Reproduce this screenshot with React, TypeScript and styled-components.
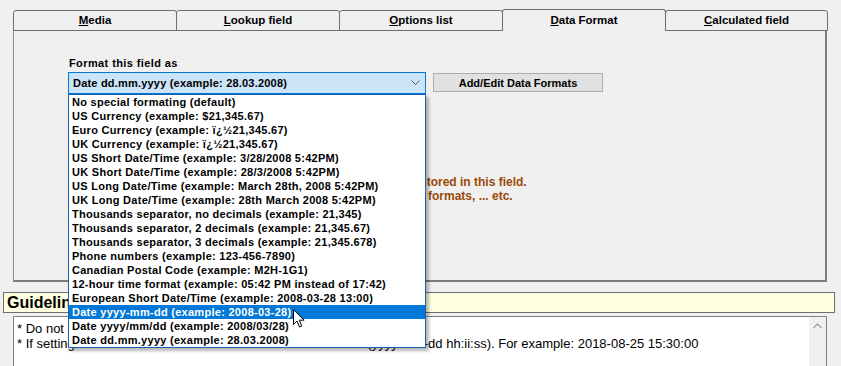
import React from "react";
import styled, { createGlobalStyle } from "styled-components";

const GlobalStyle = createGlobalStyle`
  html, body { margin: 0; padding: 0; background: #f0f0f0; }
  body { font-family: "Liberation Sans", Arial, sans-serif; color: #000; }
  * { box-sizing: border-box; }
`;

const Page = styled.div`
  width: 841px;
  height: 366px;
  overflow: hidden;
  padding-top: 9px;
  display: flex;
  flex-direction: column;
`;

const TabStrip = styled.div`
  display: flex;
  align-items: flex-end;
  margin-left: 13px;
  height: 22px;
  margin-bottom: -1px;
  position: relative;
  z-index: 1;
`;

const Tab = styled.div<{ $active?: boolean; $w: number }>`
  width: ${(p) => p.$w}px;
  height: ${(p) => (p.$active ? 22 : 21)}px;
  margin-left: -1px;
  &:first-child { margin-left: 0; }
  border: 1px solid #6e6e6e;
  border-bottom: ${(p) => (p.$active ? "none" : "1px solid #6e6e6e")};
  border-radius: 3px 3px 0 0;
  background: #f0f0f0;
  display: flex;
  justify-content: center;
  align-items: ${(p) => (p.$active ? "flex-start" : "center")};
  padding-top: ${(p) => (p.$active ? 4 : 0)}px;
  padding-bottom: ${(p) => (p.$active ? 0 : 2)}px;
  font-size: 11.5px;
  font-weight: bold;
  position: relative;
  z-index: ${(p) => (p.$active ? 2 : 1)};
`;

const AccessKey = styled.span`
  text-decoration: underline;
`;

const Panel = styled.div`
  margin-left: 13px;
  width: 814px;
  height: 252px;
  border-top: 1px solid #8c8c8c;
  border-left: 1px solid #8c8c8c;
  border-right: 2px solid #7d7d7d;
  border-bottom: 2px solid #7d7d7d;
  padding: 26px 0 0 55px;
  display: flex;
  flex-direction: column;
`;

const FieldLabel = styled.div`
  font-size: 11px;
  font-weight: bold;
  letter-spacing: 0.4px;
  line-height: 13px;
  margin-bottom: 2px;
`;

const FormatRow = styled.div`
  display: flex;
  align-items: flex-start;
  margin-left: -1px;
  gap: 7px;
`;

const SelectWrap = styled.div`
  position: relative;
  width: 358px;
`;

const SelectBox = styled.div`
  height: 22px;
  border: 1px solid #0078d7;
  background: #cce4f7;
  display: flex;
  align-items: center;
  justify-content: space-between;
  padding: 0 5px 0 4px;
  font-size: 11px;
  font-weight: bold;
  letter-spacing: 0.2px;
`;

const DropList = styled.div`
  position: absolute;
  left: 0;
  top: 22px;
  width: 358px;
  background: #fff;
  border: 1px solid #1a5fb4;
  box-shadow: 3px 3px 3px rgba(0, 0, 0, 0.28);
  z-index: 10;
`;

const DropItem = styled.div<{ $selected?: boolean }>`
  height: 14px;
  line-height: 14px;
  padding-left: 3px;
  font-size: 11px;
  font-weight: bold;
  letter-spacing: 0.28px;
  white-space: nowrap;
  background: ${(p) => (p.$selected ? "#0078d7" : "transparent")};
  color: ${(p) => (p.$selected ? "#fff" : "#000")};
`;

const Cursor = styled.svg`
  position: absolute;
  left: 224px;
  top: 214px;
`;

const Button = styled.div`
  width: 170px;
  height: 19px;
  margin-top: 1px;
  background: #e1e1e1;
  border: 1px solid #adadad;
  display: flex;
  align-items: center;
  justify-content: center;
  font-size: 11px;
  font-weight: bold;
`;

const Notes = styled.div`
  margin-top: 81px;
  color: #9a4a06;
  font-size: 12px;
  font-weight: bold;
  line-height: 14px;
`;

const NoteLine = styled.div`
  display: flex;
  white-space: nowrap;
`;

const Hidden = styled.span<{ $w: number }>`
  display: inline-block;
  width: ${(p) => p.$w}px;
  overflow: hidden;
`;

const GuideBar = styled.div`
  margin: 10px 0 0 3px;
  width: 832px;
  height: 21px;
  border: 1px solid #6e6e6e;
  background: #ffffe1;
  font-size: 16px;
  font-weight: bold;
  line-height: 19px;
  padding-left: 3px;
`;

const GuideBox = styled.div`
  margin: 3px 0 0 13px;
  width: 814px;
  flex: 1;
  border: 1px solid #828282;
  border-bottom: none;
  background: #fff;
  display: flex;
`;

const GuideText = styled.div`
  flex: 1;
  padding: 4px 0 0 3px;
  font-size: 13px;
  line-height: 15px;
  white-space: nowrap;
`;

const ScrollBar = styled.div`
  width: 17px;
  background: #f0f0f0;
  display: flex;
  justify-content: center;
  padding-top: 6px;
`;

const tabs = [
  { key: "M", rest: "edia", w: 164 },
  { key: "L", rest: "ookup field", w: 164 },
  { key: "O", rest: "ptions list", w: 164 },
  { key: "D", rest: "ata Format", w: 164, active: true },
  { key: "C", rest: "alculated field", w: 163 },
];

const formats = [
  "No special formating (default)",
  "US Currency (example: $21,345.67)",
  "Euro Currency (example: \u00ef\u00bf\u00bd21,345.67)",
  "UK Currency (example: \u00ef\u00bf\u00bd21,345.67)",
  "US Short Date/Time (example: 3/28/2008 5:42PM)",
  "UK Short Date/Time (example: 28/3/2008 5:42PM)",
  "US Long Date/Time (example: March 28th, 2008 5:42PM)",
  "UK Long Date/Time (example: 28th March 2008 5:42PM)",
  "Thousands separator, no decimals (example: 21,345)",
  "Thousands separator, 2 decimals (example: 21,345.67)",
  "Thousands separator, 3 decimals (example: 21,345.678)",
  "Phone numbers (example: 123-456-7890)",
  "Canadian Postal Code (example: M2H-1G1)",
  "12-hour time format (example: 05:42 PM instead of 17:42)",
  "European Short Date/Time (example: 2008-03-28 13:00)",
  "Date yyyy-mm-dd (example: 2008-03-28)",
  "Date yyyy/mm/dd (example: 2008/03/28)",
  "Date dd.mm.yyyy (example: 28.03.2008)",
];

export default function App() {
  return (
    <>
      <GlobalStyle />
      <Page>
        <TabStrip>
          {tabs.map((t) => (
            <Tab key={t.key} $w={t.w} $active={t.active}>
              <span>
                <AccessKey>{t.key}</AccessKey>
                {t.rest}
              </span>
            </Tab>
          ))}
        </TabStrip>
        <Panel>
          <FieldLabel>Format this field as</FieldLabel>
          <FormatRow>
            <SelectWrap>
              <SelectBox>
                <span>Date dd.mm.yyyy (example: 28.03.2008)</span>
                <svg width="9" height="6" viewBox="0 0 9 6">
                  <path d="M0.5 0.5 L4.5 4.5 L8.5 0.5" fill="none" stroke="#5a5a5a" strokeWidth="1" />
                </svg>
              </SelectBox>
              <DropList>
                {formats.map((f, i) => (
                  <DropItem key={f} $selected={i === 15}>
                    {f}
                  </DropItem>
                ))}
                <Cursor width="13" height="20" viewBox="0 0 13 20">
                  <path
                    d="M0.5 0.5 L0.5 15.5 L4 12 L6.5 18 L8.8 17 L6.3 11.2 L11 11.2 Z"
                    fill="#fff"
                    stroke="#000"
                    strokeWidth="1"
                    strokeLinejoin="miter"
                  />
                </Cursor>
              </DropList>
            </SelectWrap>
            <Button>Add/Edit Data Formats</Button>
          </FormatRow>
          <Notes>
            <NoteLine>
              <Hidden $w={351}>Choose how the value is displayed. This does not change the data </Hidden>
              <span>stored in this field.</span>
            </NoteLine>
            <NoteLine>
              <Hidden $w={359}>Examples: currencies, dates, times, phone numbers, number </Hidden>
              <span>formats, ... etc.</span>
            </NoteLine>
          </Notes>
        </Panel>
        <GuideBar>Guidelines</GuideBar>
        <GuideBox>
          <GuideText>
            <div>* Do not set a default value for this field unless it is needed.</div>
            <div>
              * If setting a default value for a date/time field use the format (yyyy-mm-dd hh:ii:ss). For example: 2018-08-25 15:30:00
            </div>
          </GuideText>
          <ScrollBar>
            <svg width="9" height="6" viewBox="0 0 9 6">
              <path d="M0.5 5 L4.5 1 L8.5 5" fill="none" stroke="#a3a3a3" strokeWidth="1.3" />
            </svg>
          </ScrollBar>
        </GuideBox>
      </Page>
    </>
  );
}
